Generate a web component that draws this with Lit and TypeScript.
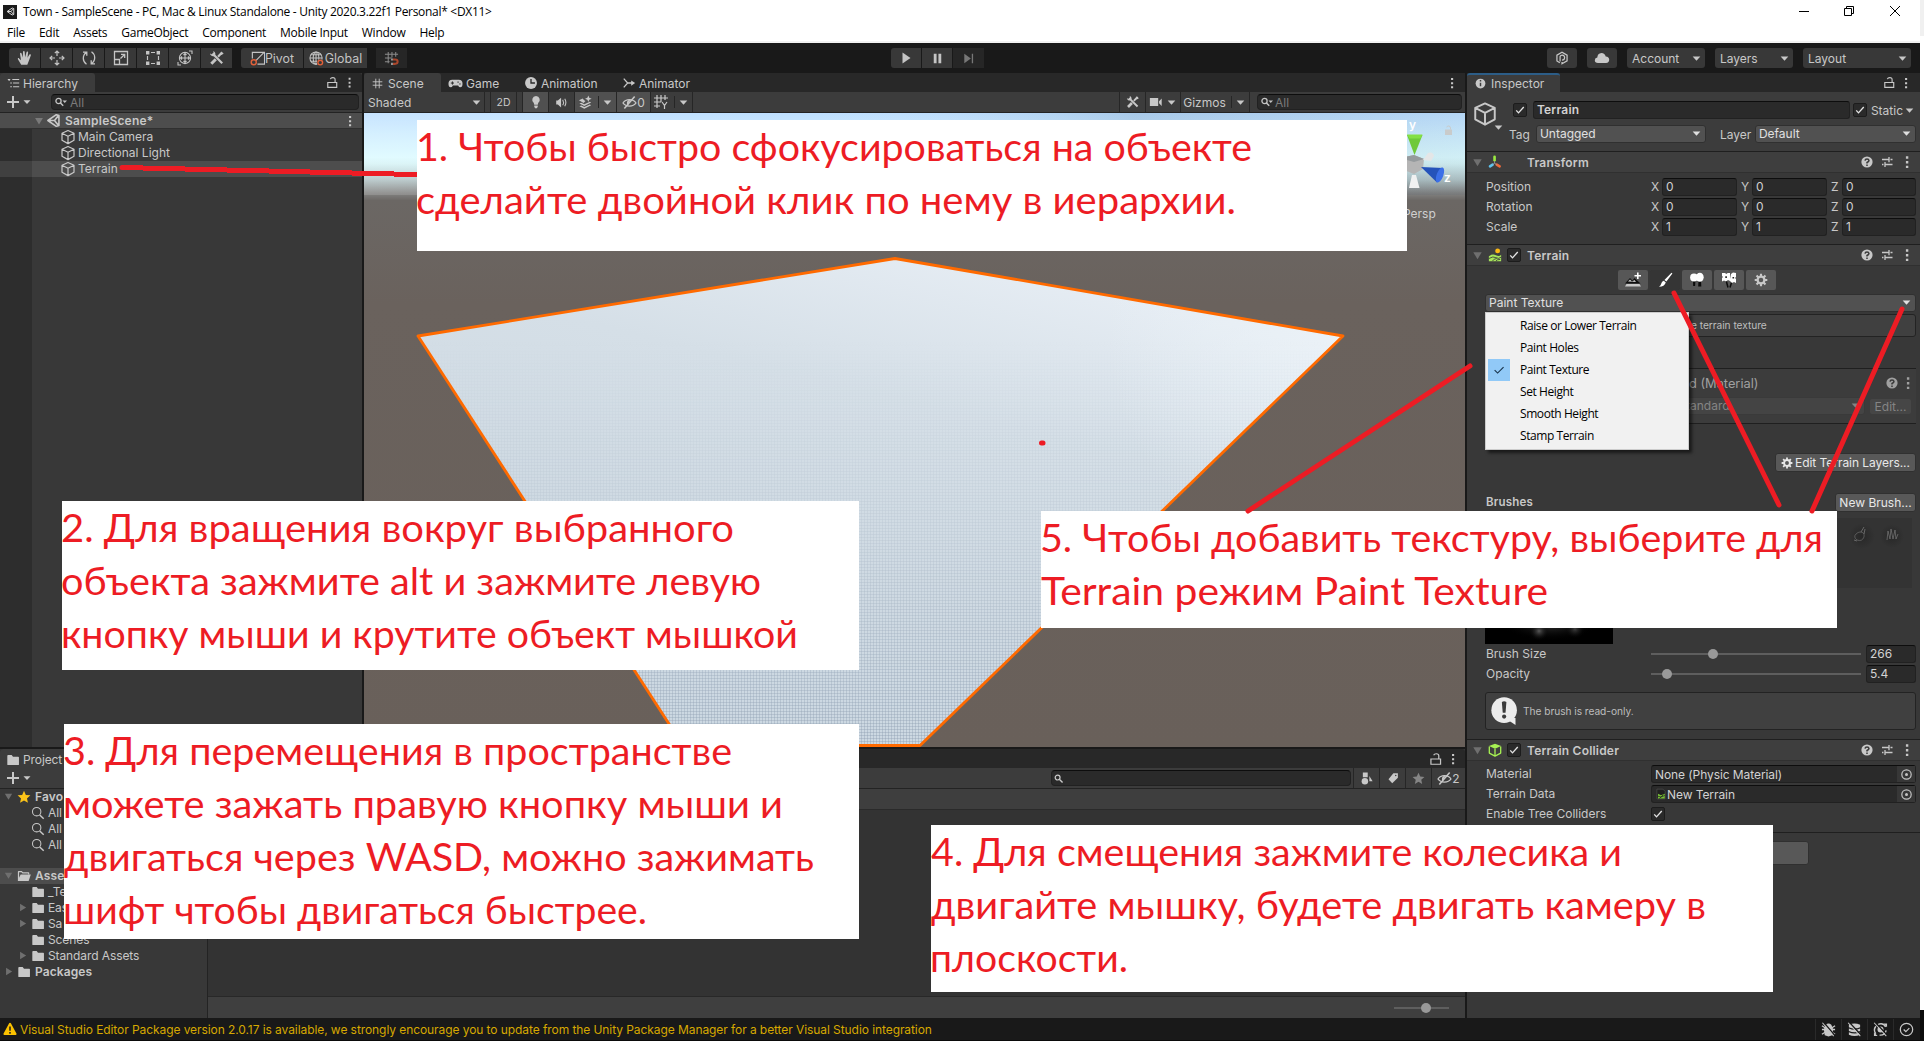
import { LitElement, html, svg, css, nothing } from "lit";
import type { TemplateResult } from "lit";
import { customElement } from "lit/decorators.js";
import { classMap } from "lit/directives/class-map.js";

/* Icons share a 16 x 16 grid and take their colour from the surrounding text. */
const star = svg`<path fill="currentColor" d="M8 .8l2.100 4.800 5.200.5-3.900 3.500 1.100 5.100L8 12.100l-4.500 2.600 1.100-5.100L.7 6.100l5.200-.5z"/>`;
const tools = svg`<path stroke="currentColor" stroke-width="2.200" fill="none" d="M3.500 3.500l9.700 9.700M13 2.500l-4 4.300"/><path stroke="currentColor" stroke-width="3" d="M2.300 13.700l4.500-4.500"/><path fill="currentColor" d="M1 3.600C1.500 6 4 7 5.600 5.800 7 4.500 6.600 2 4.300 1l.2 2.300-1.300 1.300zM12.500 1.500l2.200 2.200-2.500 1.300-1-1z"/>`;
const eyeOff = svg`<g fill="none" stroke="currentColor" stroke-width="1.300"><path d="M1 8.500C4.200 3.800 11.800 3.800 15 8.500 11.800 13 4.200 13 1 8.500z"/><path d="M13.500 1.500l-11 13" stroke-width="1.600"/></g><path fill="currentColor" d="M8.800 5.500a3 3 0 0 0-2.800 5z"/>`;
const gear = svg`<circle cx="8" cy="8" r="3.900" fill="none" stroke="currentColor" stroke-width="2.600"/><path stroke="currentColor" stroke-width="2.400" d="M8 .8v3M8 12.200v3M.8 8h3M12.200 8h3M2.900 2.900l2.200 2.200M10.900 10.900l2.200 2.200M13.100 2.900l-2.200 2.200M5.100 10.900l-2.200 2.200"/>`;
const folder = svg`<path fill="currentColor" d="M1.500 3.200q0-1 1-1h4l1.500 2h6q.8 0 .8.800V13q0 .8-.8.800H2.300q-.8 0-.8-.8z"/>`;
const gridMark = svg`<path stroke="currentColor" stroke-width="1.300" fill="none" d="M5.500 1v14M10.500 1v14M1 5.500h14M1 10.500h14"/>`;
const cube = svg`<path fill="none" stroke="currentColor" stroke-width="1.200" stroke-linejoin="round" d="M8 1.500l6 2.800v7L8 14.600l-6-3.300v-7zM2 4.300l6 3 6-3M8 7.300v7.300"/>`;
const circleBase = svg`<circle cx="8" cy="8" r="6.600" fill="none" stroke="currentColor" stroke-width="1.300"/>`;

const ICONS: Record<string, TemplateResult | ReturnType<typeof svg>> = {
  star, tools, eyeOff, gear, folder, grid: gridMark, cube,
  hand: svg`<path fill="currentColor" d="M4.200 14.800L.9 9.200c-.4-.9.600-1.500 1.200-.8L4 10.300 3 3.800c-.1-1.100 1.300-1.300 1.600-.2L5.800 7.500 6 1.800c.1-1.100 1.600-1.100 1.700 0L8.100 7.300 9.500 2.200c.3-1 1.700-.7 1.600.4L10.500 7.800l1.900-3.200c.6-.9 1.800-.2 1.400.8l-2.300 6.300-1.200 3.100z"/>`,
  move: svg`<g fill="none" stroke="currentColor" stroke-width="1.200"><path d="M8 1v5M8 10v5M1 8h5M10 8h5M5.800 3.200L8 1l2.200 2.200M5.800 12.800L8 15l2.200-2.200M3.200 5.800L1 8l2.200 2.200M12.800 5.800L15 8l-2.200 2.200"/></g>`,
  rotate: svg`<g fill="none" stroke="currentColor" stroke-width="1.300"><path d="M5.500 14.200C1.500 11.500 1 5.500 5.500 2.300M2 2.200h3.800v3.600M10.500 1.800c4 2.700 4.500 8.700 0 11.900M14 13.800h-3.800v-3.600"/></g>`,
  scale: svg`<g fill="none" stroke="currentColor" stroke-width="1.300"><path d="M1.500 1.500h13v13h-13zM1.500 9.500h5v5M7.500 8.500l4-4M8 4.300h3.700V8"/></g>`,
  rect: svg`<path fill="currentColor" d="M1 1h3.400v3.400H1zM11.600 1H15v3.400h-3.400zM1 11.600h3.400V15H1zM11.600 11.600H15V15h-3.400z"/><path stroke="currentColor" stroke-width="1.200" d="M6 2.500h4M6 13.500h4M2.500 6v4M13.500 6v4"/>`,
  transform: svg`<g fill="none" stroke="currentColor" stroke-width="1.100"><circle cx="8" cy="8" r="5.600"/><path d="M8 3.500v9M3.500 8h9M6.500 5L8 3.500 9.500 5M6.500 11L8 12.500 9.500 11M5 6.500L3.500 8 5 9.500M11 6.500L12.500 8 11 9.500M12 1h3v3M4 15H1v-3"/></g>`,
  pivot: svg`<g fill="none" stroke="currentColor" stroke-width="1.200"><path d="M2.500 8V1.500h13v12.500H8M6 10.500l9-9"/></g><circle cx="4" cy="12" r="2.700" fill="none" stroke="#e2613a" stroke-width="1.500"/>`,
  global: svg`<g fill="none" stroke="currentColor" stroke-width="1.100"><circle cx="7.500" cy="7.500" r="6.500"/><ellipse cx="7.500" cy="7.500" rx="3" ry="6.500"/><path d="M1 7.500h13M2 4h11M2 11h7M7.500 1v13"/></g><circle cx="12" cy="12.300" r="3.600" fill="#383838"/><circle cx="12" cy="12.300" r="2.500" fill="none" stroke="#e2613a" stroke-width="1.500"/>`,
  snap: svg`<path fill="none" stroke="#8a8a8a" stroke-width="1.100" d="M4.500 1v12M8.500 1v6M12.500 1v5M1 3.500h14M1 7.500h7M1 11.500h5"/><path fill="none" stroke="#a9472c" stroke-width="2.200" d="M9.500 9h2.500q2.500 0 2.500 2.300T12 13.700H9.500"/><path stroke="#9a9a9a" stroke-width="2.200" d="M7.500 9h2M7.500 13.700h2"/>`,
  play: svg`<path fill="currentColor" d="M4.500 2.500l8 5.500-8 5.500z"/>`,
  pause: svg`<path fill="currentColor" d="M4 3h3v10H4zM9 3h3v10H9z"/>`,
  step: svg`<path fill="currentColor" d="M3.500 3l7 5-7 5zM11.500 3h1.400v10h-1.400z"/>`,
  list: svg`<path stroke="currentColor" stroke-width="1.300" fill="none" d="M1 3h3M6.500 3H15M4 7.500h2M7.500 7.500H15M4 12h2M7.500 12H15M2.600 3v2"/>`,
  lock: svg`<path fill="none" stroke="currentColor" stroke-width="1.400" d="M2.200 8h11v6h-11zM11.200 8V4.500Q11.200 2 8.400 2 6 2 5.300 3.800"/>`,
  kebab: svg`<path fill="currentColor" d="M6.900 2.300h2.400v2.400H6.900zM6.900 7h2.400v2.400H6.900zM6.900 11.700h2.400v2.400H6.900z"/>`,
  plus: svg`<path stroke="currentColor" stroke-width="2" d="M8 2v12M2 8h12"/>`,
  down: svg`<path fill="currentColor" d="M3.300 5.500h9.400L8 10.700z"/>`,
  fold: svg`<path fill="currentColor" d="M3.500 4.500h9L8 12z"/>`,
  unfold: svg`<path fill="currentColor" d="M5 3.500v9L12.500 8z"/>`,
  search: svg`<circle cx="6" cy="7" r="2.600" fill="none" stroke="currentColor" stroke-width="1.300"/><path stroke="currentColor" stroke-width="1.500" d="M7.800 8.800l3.500 3.500"/>`,
  searchMenu: svg`<circle cx="5.500" cy="7" r="2.600" fill="none" stroke="currentColor" stroke-width="1.300"/><path stroke="currentColor" stroke-width="1.500" d="M7.200 8.800l3 3"/><path fill="currentColor" d="M9.500 6.500h4.500l-2.250 2.400z"/>`,
  searchBig: svg`<circle cx="6.500" cy="6.500" r="4.800" fill="none" stroke="currentColor" stroke-width="1.200"/><path stroke="currentColor" stroke-width="1.700" d="M10 10.300l4.500 4.200"/>`,
  unity: svg`<g fill="none" stroke="currentColor" stroke-width="1.700" stroke-linejoin="round"><path d="M11 1.800L2 8l9 6.200 2.800-1V2.800zM2.500 8h6.500L13.300 2.800M9 8l4.300 5.200"/></g>`,
  gamepad: svg`<path fill="currentColor" d="M4.500 4h7q4 .2 4 4.200 0 3.800-2.500 3.800-1.200 0-2.200-2H5.200q-1 2-2.200 2Q.5 12 .5 8.200.5 4.200 4.500 4z"/><path stroke="#282828" stroke-width="1" d="M3 7.500h3.400M4.700 5.800v3.400M10 6.500h1.500M12 8.500h1.500"/>`,
  clock: svg`<circle cx="8" cy="8" r="6.800" fill="currentColor"/><path stroke="#282828" stroke-width="1.500" fill="none" d="M8 3.500V8h4.500"/>`,
  animator: svg`<path fill="none" stroke="currentColor" stroke-width="1.500" d="M2 3l4.500 5L2 13M6.500 8H12"/><path fill="currentColor" d="M10.500 5l4.500 3-4.500 3z"/>`,
  bulb: svg`<path fill="currentColor" d="M8 1.200a4.300 4.300 0 0 1 2.500 7.800L10 11H6l-.5-2A4.300 4.300 0 0 1 8 1.200zM6 12h4v1.500L9 15H7l-1-1.500z"/>`,
  audio: svg`<path fill="currentColor" d="M1.500 5.500h2L7.500 2v12L3.500 10.500h-2z"/><path fill="none" stroke="currentColor" stroke-width="1.300" d="M9.500 4.500q2 3.500 0 7M12 3.500q2.800 4.500 0 9"/>`,
  effects: svg`<path fill="currentColor" d="M1 5.500l4-1.800 1.500 1.800L8 6.500l-2 2zM1.500 9l2-.8 3.200 1.600 6-2.600 1.300.8-7.300 3.700zM1.500 12l2-.8 3.200 1.600 6-2.600 1.300.8-7.300 3.700zM11 .5l1 2.500 2.500 1L12 5l-1 2.500L10 5 7.500 4 10 3z"/>`,
  gridY: svg`<path stroke="currentColor" stroke-width="1.200" fill="none" d="M4 1v13M8 1v7M12 1v5M1 4h14M1 8h7M1 12h6M9 8l2.500 3.500L14 8M11.500 11.500V15"/>`,
  camera: svg`<path fill="currentColor" d="M1 3.500h9.500v9H1zM11.500 7L14.500 4v8.500l-3-3z"/>`,
  info: svg`<circle cx="8" cy="8" r="6" fill="currentColor"/><path stroke="#3c3c3c" stroke-width="1.800" d="M8 3.800v1.800M8 7v4.500"/>`,
  help: svg`<circle cx="8" cy="8" r="5.600" fill="currentColor"/><path fill="none" stroke="#3a3a3a" stroke-width="1.500" d="M6 6.700Q6.200 5 8 5t2 1.600Q10 7.700 8 8.500v1M8 10.600v1.400"/>`,
  preset: svg`<path stroke="currentColor" stroke-width="1.300" d="M3 5.500h6.500M11.500 5.500h2M10 3v5.200M3 10.500h1.500M6.500 10.500h7M6 8v5"/>`,
  check: svg`<path fill="none" stroke="#e4e4e4" stroke-width="1.800" d="M3 8.500l3 3.300L13 4"/>`,
  checkThin: svg`<path fill="none" stroke="#17324a" stroke-width="1.300" d="M3 8.200l3.400 3.300L13.200 4.600"/>`,
  axes: svg`<g stroke-width="3" stroke-linecap="round"><path stroke="#9bea42" d="M7.500 2v4"/><path stroke="#5fc3ee" d="M2.300 13l3-2"/><path stroke="#ef6a3a" d="M10 11l3.300 2"/></g><path stroke="#9a9a9a" stroke-width="1" d="M7.500 7v2.500M7.500 9.500L5.500 11M7.500 9.500l2.500 1.500" fill="none"/>`,
  terrain: svg`<circle cx="11" cy="3.300" r="2.800" fill="#fcb813"/><path fill="#a6e45a" d="M1 9.500Q5 6.300 9 8.300t6-.5V15H1z"/><path fill="none" stroke="#3c3c3c" stroke-width="1" d="M1 12q5-3 8-1t6-.5M5 15q2-3 5-3M9 15q1-2 5-2"/>`,
  collider: svg`<path fill="#a6f053" d="M8 .8l7 2.700-7 3-7-3z"/><path fill="none" stroke="#a6f053" stroke-width="1.500" stroke-linejoin="round" d="M1.500 4v7.500L8 15l6.500-3.500V4M8 6.500V15"/>`,
  target: svg`<circle cx="8" cy="8" r="5" fill="none" stroke="currentColor" stroke-width="1.300"/><circle cx="8" cy="8" r="1.600" fill="currentColor"/>`,
  asset: svg`<path fill="#202020" stroke="#555" stroke-width=".8" d="M2.500 1.500h8l3 3v10h-11z"/><path fill="#78c135" d="M4 7.500l4 2 5-2V14H4z"/><path stroke="#202020" d="M4 11l4 1 5-2M6 14l5-5" fill="none"/>`,
  addTerrain: svg`<path fill="#101010" d="M0 11.500l5-5.500 2.500 2.500L9.500 6 15.500 11.500z"/><path fill="currentColor" d="M0 14.500h16L14.500 12H1.500zM3 9.500L5 7.500l2 2L9.500 8 11 10z"/><path stroke="#fff" stroke-width="1.600" d="M12.800 .5v6.500M9.500 3.700h6.500"/>`,
  brush: svg`<path fill="#fff" d="M14.500.8l.9.800-6 8-2-1.700zM6.800 8.700l2 1.700Q7.500 14.500 2 14.800q2-1.200 2.300-3.300.4-2.400 2.500-2.800z"/>`,
  trees: svg`<path fill="#0c0c0c" d="M4 8h2.500l-.4 6H4.200zM9.500 8h2.500l.3 6.500H9.200z"/><circle cx="5" cy="5.500" r="3.900" fill="#fff"/><ellipse cx="10.800" cy="5.200" rx="3.900" ry="4.500" fill="#fff"/>`,
  flowers: svg`<path stroke="#0c0c0c" stroke-width="1.500" d="M5 8l2 7.500M11 9l-2 6.500" fill="none"/><path fill="#fff" d="M1 1h3l1.300 1L6.700 1H9v8l-2-1-2 1.500L3 8.500 1 9.500V6l1-1-1-1zM10 2l2-1.500L15 1v4l-1 1 1 1v4l-2-1-2 1-2-2V7z"/><path fill="#202020" d="M4.300 4.300h1.600v1.600H4.300zM11.500 5h1.600v1.600h-1.600z"/>`,
  plastic: svg`<path fill="none" stroke="currentColor" stroke-width="1.400" d="M5.500 13.500L2.200 11.300V4.700L8 1.400l5.800 3.300v6.600L8 14.600V12.500M5.800 12V6.200Q6.500 4.600 8.300 4.700q2.700.3 2.700 3Q10.800 10.400 8 10.300"/>`,
  cloud: svg`<path fill="currentColor" d="M4 13Q.8 12.800.8 10.200.9 7.900 3.300 7.500 3.500 3.300 7.500 3q3.300.1 4.200 3.500 3.500.2 3.500 3.300T12 13z"/>`,
  folderOpen: svg`<path fill="currentColor" d="M1 13.700V3q0-.8.800-.8h3.700l1.200 1.500h6.500q.8 0 .8.800v1.500h-1.300V5.100H6.300L5 3.600H2.400V10l1.800-3.700h11.600L13.300 13.700z"/>`,
  shapes: svg`<path fill="currentColor" d="M3.500 .5h6v6h-6zM11.500 5l4 6.500h-4z"/><circle cx="6" cy="11.500" r="4" fill="currentColor"/>`,
  tag: svg`<path fill="currentColor" d="M8.500 1.500H14.500v6L7 15 2 9.500z"/><circle cx="11.700" cy="4.500" r="1" fill="#3c3c3c"/>`,
  warning: svg`<path fill="#fcc200" d="M8 .8q.7 0 1 .7l6.500 12q.3 1.200-.9 1.300H1.400q-1.200-.1-.9-1.300L7 1.500q.3-.7 1-.7z"/><path stroke="#222" stroke-width="1.800" d="M8 5v5M8 11.500v1.800"/>`,
  bug: svg`<path fill="currentColor" d="M5 3q3-3 6 0l2 5-1 6-4 1.500L4 14 3 8z"/><path stroke="currentColor" stroke-width="1.400" d="M1 4l14 9M1 8h14M1 13l14-9"/><path stroke="#191919" stroke-width="1.400" d="M3 .5l12 14"/><path stroke="currentColor" stroke-width="1.100" d="M1.500.8l12 14.200"/>`,
  layers: svg`<path fill="currentColor" d="M2 3q6-3 12 0v2.500q-6 2.500-12 0zM2 7q6 2.500 12 0v2.700q-6 2.500-12 0zM2 11q6 2.500 12 0v2.500q-6 3-12 0z"/><path stroke="#191919" stroke-width="1.600" d="M2.500.5l13 14"/><path stroke="currentColor" stroke-width="1.100" d="M1.200.8l13 14.200"/>`,
  refreshOff: svg`<path fill="none" stroke="currentColor" stroke-width="1.500" d="M5 2.700q6-2.500 8.500 2.500M14 9q-1 5.500-7 5M3 12.500Q0 8.500 3 4.500"/><circle cx="8" cy="8" r="3.200" fill="currentColor"/><path fill="currentColor" d="M11 1.500h4v4zM5 14.800H1v-4z"/><path stroke="#191919" stroke-width="1.600" d="M2.500.5l13 14"/><path stroke="currentColor" stroke-width="1.100" d="M1.200.8l13 14.200"/>`,
  ok: svg`${circleBase}<path fill="none" stroke="currentColor" stroke-width="1.300" d="M5 8l2.300 2.300L11 6.500"/>`,
  speech: svg`<circle cx="7.500" cy="7.500" r="7.300" fill="#ececec"/><path fill="#ececec" d="M8 12h6v4z"/><path fill="#3c3c3c" d="M6.200 2.800q1.300-.8 2.600 0L8.300 9H6.700z"/><circle cx="7.500" cy="11.200" r="1.200" fill="#3c3c3c"/>`,
};

const ic = (name: string, size = 16, cls = "") =>
  html`<svg class="ic ${cls}" width=${size} height=${size} viewBox="0 0 16 16">${ICONS[name]}</svg>`;

type Note = { x: number; y: number; w: number; h: number; lines: [string, number, number, number][] };
/* Each line is text, left, baseline and width inside its note. */
const NOTES: Note[] = [
  { x: 417, y: 120, w: 990, h: 131, lines: [["1. Чтобы быстро сфокусироваться на объекте", -1, 40.5, 836], ["сделайте двойной клик по нему в иерархии.", -1, 93.5, 820]] },
  { x: 62, y: 501, w: 797, h: 169, lines: [["2. Для вращения вокруг выбранного", -1, 40.5, 673], ["объекта зажмите alt и зажмите левую", -1, 93.5, 700], ["кнопку мыши и крутите объект мышкой", -1, 146.5, 737]] },
  { x: 64, y: 724, w: 795, h: 215, lines: [["3. Для перемещения в пространстве", -1, 40.5, 669], ["можете зажать правую кнопку мыши и", -1, 93.5, 720], ["двигаться через WASD, можно зажимать", 0, 146.5, 750], ["шифт чтобы двигаться быстрее.", -1, 199.5, 584]] },
  { x: 931, y: 825, w: 842, h: 167, lines: [["4. Для смещения зажмите колесика и", 0, 40.5, 691], ["двигайте мышку, будете двигать камеру в", 0, 93.5, 775], ["плоскости.", -1, 146.5, 198]] },
  { x: 1041, y: 511, w: 796, h: 117, lines: [["5. Чтобы добавить текстуру, выберите для", -1, 40.5, 783], ["Terrain режим Paint Texture", 0, 93.5, 507]] },
];

const base = css`
  * { box-sizing: border-box; }
  .ic { flex: none; display: block; }
  .row { display: flex; align-items: center; }
  .grow { flex: 1; min-width: 0; }
  .b { font-weight: 600; letter-spacing: 0.2px; }
`;

/* ---------- Hierarchy ---------- */
@customElement("hierarchy-panel")
export class HierarchyPanel extends LitElement {
  static styles = [base, css`
    :host { display: flex; flex-direction: column; background: #383838; overflow: hidden; }
    .tabs { height: 19px; background: #282828; border-radius: 3px 3px 0 0; }
    .tab { width: 95px; height: 19px; padding: 1px 0 0 7px; gap: 3px; background: #3c3c3c; border-radius: 3px 3px 0 0; }
    .tail { padding-right: 6px; gap: 4px; }
    .bar { height: 21px; background: #3c3c3c; border-bottom: 1px solid #232323; padding: 0 3px 0 5px; }
    .find { margin-left: 18px; height: 16px; background: #2a2a2a; border: 1px solid #212121; border-top-color: #0d0d0d; border-radius: 4px; color: #7b7b7b; padding-left: 1px; gap: 1px; }
    .find .ic { color: #c4c4c4; }
    .scene { height: 16px; background: #4d4d4d; border-bottom: 1px solid #303030; padding: 0 5px 0 32px; }
    .scene .ic:first-child { color: #7a7a7a; }
    .item { height: 16px; }
    .gutter { width: 32px; align-self: stretch; background: #2d2d2d; }
    .item.on { background: #4d4d4d; }
    .item.on .gutter { background: #404040; }
    .name { padding-left: 28px; gap: 2px; }
    .name span { padding-bottom: 1px; }
    .rest { display: flex; flex: 1; }
  `];
  render() {
    return html`
      <div class="row tabs"><div class="row tab">${ic("list", 13)}<span>Hierarchy</span></div><div class="grow"></div>
        <div class="row tail">${ic("lock", 13)}${ic("kebab", 13)}</div></div>
      <div class="row bar">${ic("plus", 16)}${ic("down", 12)}<div class="row grow find">${ic("searchMenu", 16)}<span>All</span></div></div>
      <div class="row scene">${ic("fold", 14)}${ic("unity", 15)}<span class="b grow" style="padding-left:4px">SampleScene*</span>${ic("kebab", 14)}</div>
      ${["Main Camera", "Directional Light", "Terrain"].map((n, i) => html`
        <div class=${classMap({ row: true, item: true, on: i === 2 })}><div class="gutter"></div><div class="row name">${ic("cube", 16)}<span>${n}</span></div></div>`)}
      <div class="rest"><div class="gutter"></div></div>`;
  }
}

/* ---------- Scene ---------- */
@customElement("scene-panel")
export class ScenePanel extends LitElement {
  static styles = [base, css`
    :host { display: flex; flex-direction: column; background: #383838; overflow: hidden; }
    .tabs { height: 19px; background: #282828; padding-right: 6px; }
    .tab { height: 19px; padding-top: 1px; }
    .on { width: 77px; background: #3c3c3c; padding-left: 8px; gap: 5px; border-radius: 3px 3px 0 0; }
    .bar { height: 21px; background: #3c3c3c; border-bottom: 1px solid #232323; }
    .cell { height: 20px; border-right: 1px solid #262626; justify-content: center; }
    .lit { background: #505050; }
    .sep { width: 1px; height: 12px; background: #262626; }
    .find { width: 205px; margin: 0 3px 0 7px; height: 16px; background: #2a2a2a; border: 1px solid #212121; border-top-color: #0d0d0d; border-radius: 4px; color: #7b7b7b; gap: 0; padding-left: 1px; }
    .find .ic { color: #c4c4c4; }
    .view { display: block; width: 1101px; height: 634px; }
    .axis { font: 600 12px Inter, sans-serif; fill: #fff; }
    .mode { font: 12px Inter, sans-serif; fill: #d0d0d0; }
  `];
  render() {
    const cell = (w: number, c: unknown, lit = false) =>
      html`<div class=${classMap({ row: true, cell: true, lit })} style="width:${w}px">${c}</div>`;
    return html`
      <div class="row tabs">
        <div class="row tab on">${ic("grid", 11)}<span>Scene</span></div>
        <div class="row tab" style="width:83px;padding-left:7px;gap:3px">${ic("gamepad", 15)}<span>Game</span></div>
        <div class="row tab" style="width:97px;gap:3px">${ic("clock", 14)}<span>Animation</span></div>
        <div class="row tab grow" style="gap:3px;padding-left:1px">${ic("animator", 14)}<span>Animator</span></div>
        ${ic("kebab", 14)}
      </div>
      <div class="row bar">
        <div class="row cell" style="width:121px;padding:0 1px 0 4px"><span class="grow">Shaded</span>${ic("down", 13)}</div>
        ${cell(6, nothing)}${cell(26, html`<span style="font-size:10.500px">2D</span>`)}${cell(6, nothing)}
        ${cell(26, ic("bulb", 14), true)}${cell(26, ic("audio", 13))}
        ${cell(42, html`${ic("effects", 15)}<span style="width:5px"></span><span class="sep"></span><span style="width:2px"></span>${ic("down", 13)}`, true)}
        ${cell(34, html`${ic("eyeOff", 15)}<span>0</span>`, true)}
        ${cell(42, html`${ic("gridY", 16)}<span style="width:5px"></span><span class="sep"></span><span style="width:2px"></span>${ic("down", 13)}`)}
        <div class="grow cell"></div>
        ${cell(26, ic("tools", 14))}
        ${cell(35, html`${ic("camera", 14)}<span style="width:2px"></span>${ic("down", 13)}`)}
        ${cell(69, html`<span>Gizmos</span><span style="width:5px"></span><span class="sep"></span><span style="width:2px"></span>${ic("down", 13)}`)}
        <div class="row find">${ic("searchMenu", 16)}<span>All</span></div>
      </div>
      <svg class="view" viewBox="364 113 1101 634">
        <defs>
          <linearGradient id="sky" x1="0" y1="113" x2="0" y2="747" gradientUnits="userSpaceOnUse">
            <stop offset="0" stop-color="#bedfff"/><stop offset=".035" stop-color="#cfeeff"/><stop offset=".07" stop-color="#dcfaff"/>
            <stop offset=".08" stop-color="#d6f3f6"/><stop offset=".105" stop-color="#b2c4c6"/><stop offset=".125" stop-color="#858685"/>
            <stop offset=".138" stop-color="#6b6764"/><stop offset=".3" stop-color="#6a625d"/><stop offset="1" stop-color="#69605a"/>
          </linearGradient>
          <linearGradient id="shade" x1="364" y1="0" x2="1465" y2="0" gradientUnits="userSpaceOnUse">
            <stop offset="0" stop-color="#fff" stop-opacity=".15"/><stop offset=".4" stop-color="#fff" stop-opacity="0"/><stop offset=".7" stop-color="#204060" stop-opacity=".14"/><stop offset="1" stop-color="#204060" stop-opacity=".06"/>
          </linearGradient>
          <linearGradient id="ground" x1="960" y1="258" x2="840" y2="747" gradientUnits="userSpaceOnUse">
            <stop offset="0" stop-color="#e5ecf3"/><stop offset=".3" stop-color="#d5dfe7"/><stop offset=".7" stop-color="#ced9e2"/><stop offset="1" stop-color="#ccd8e2"/>
          </linearGradient>
          <linearGradient id="fade" x1="0" y1="340" x2="0" y2="747" gradientUnits="userSpaceOnUse">
            <stop offset="0" stop-color="#fff" stop-opacity="0"/><stop offset=".5" stop-color="#fff" stop-opacity=".35"/><stop offset="1" stop-color="#fff"/>
          </linearGradient>
          <radialGradient id="glow" cx="1345" cy="330" r="240" gradientUnits="userSpaceOnUse">
            <stop offset="0" stop-color="#ecf3f8" stop-opacity=".8"/><stop offset="1" stop-color="#ecf3f8" stop-opacity="0"/>
          </radialGradient>
          <pattern id="mesh" width="3" height="3" patternUnits="userSpaceOnUse"><path d="M0 .5h3M.5 0v3" stroke="#8799ac" stroke-opacity=".36" stroke-width="1"/></pattern>
          <mask id="m"><rect x="364" y="113" width="1101" height="634" fill="url(#fade)"/></mask>
        </defs>
        <rect x="364" y="113" width="1101" height="634" fill="url(#sky)"/>
        <rect x="364" y="113" width="1101" height="82" fill="url(#shade)"/>
        <path d="M895 258L1343 336 920 745.500H683L418 336z" fill="url(#ground)"/>
        <path d="M895 258L1343 336 920 745.500H683L418 336z" fill="url(#glow)"/>
        <path d="M895 258L1343 336 920 745.500H683L418 336z" fill="url(#mesh)" mask="url(#m)"/>
        <path d="M895 258.500L1343 336 920 745.500H683L418 336z" fill="none" stroke="#ff6a00" stroke-width="2.800" stroke-linejoin="round"/>
        <g>
          <path fill="#b5b5b5" d="M1400 158l14-3 10 4-1 10-9 5-10-4z"/><path fill="#959a9d" d="M1400 158l14-3 10 4-10 3z"/>
          <path fill="#6fc93a" d="M1407 135l7.500 20 8-20z"/><path fill="#84e044" d="M1407 134.500h15.500l-2 4h-11z"/>
          <path fill="#e4e6e7" d="M1423 160l5-7q5-2 6 3l-3 5z"/>
          <path fill="#f0f1f1" d="M1412 175h4l3.500 13h-10.500z"/>
          <path fill="#2553ba" d="M1421 167l22 1-6 14.500z"/><ellipse cx="1440" cy="175" rx="3.300" ry="8" fill="#3b6fe8" transform="rotate(20 1440 175)"/>
          <text class="axis" x="1409" y="129">y</text><text class="axis" x="1444" y="182">z</text>
          <text class="mode" x="1403" y="218">Persp</text>
        </g>
        <g fill="#c9cbcb" transform="translate(1444 125)"><path d="M1 4.500h7V10H1z"/><path d="M6.500 4.500V3Q6.500 1 4.500 1 3 1 2.800 2.300" fill="none" stroke="#c9cbcb"/></g>
      </svg>`;
  }
}

/* ---------- Project ---------- */
@customElement("project-panel")
export class ProjectPanel extends LitElement {
  static styles = [base, css`
    :host { display: flex; flex-direction: column; background: #383838; overflow: hidden; }
    .tabs { height: 19px; background: #282828; padding-right: 5px; border-radius: 3px 3px 0 0; }
    .tab { width: 85px; height: 19px; padding: 2px 0 0 6px; gap: 3px; letter-spacing: -0.1px; background: #3c3c3c; border-radius: 3px 3px 0 0; }
    .bar { height: 21px; background: #3c3c3c; border-bottom: 1px solid #232323; padding-left: 5px; }
    .find { width: 300px; height: 16px; background: #2a2a2a; border: 1px solid #212121; border-top-color: #0d0d0d; border-radius: 4px; margin-right: 2px; }
    .cell { height: 20px; border-left: 1px solid #262626; justify-content: center; }
    .body { display: flex; flex: 1; min-height: 0; }
    .tree { width: 208px; border-right: 1px solid #232323; letter-spacing: -0.1px; }
    .tree .b { letter-spacing: 0.1px; }
    .node { height: 16px; gap: 2px; white-space: nowrap; }
    .node > span { padding-bottom: 1px; }
    .node.on { background: #4d4d4d; }
    .arrow { width: 13px; color: #6f6f6f; }
    .files { display: flex; flex-direction: column; flex: 1; }
    .crumb { height: 21px; background: #3e3e3e; border-bottom: 1px solid #2a2a2a; }
    .grid { flex: 1; background: #333; }
    .foot { height: 22px; background: #3f3f3f; border-top: 1px solid #282828; justify-content: flex-end; padding-right: 16px; }
    .track { width: 55px; height: 2px; background: #5e5e5e; display: flex; align-items: center; padding-left: 27px; }
    .thumb { width: 10px; height: 10px; flex: none; border-radius: 50%; background: #999; }
    .gold { color: #fcc419; }
  `];
  node(depth: number, arrow: string, icon: string, label: string, bold = false, on = false) {
    return html`<div class=${classMap({ row: true, node: true, on })} style="padding-left:${2 + depth * 14}px">
      <span class="arrow">${arrow ? ic(arrow, 13) : nothing}</span>${ic(icon, 14, icon === "star" ? "gold" : "")}<span class=${bold ? "b" : ""} style="padding-left:${bold ? 2 : 1}px">${label}</span></div>`;
  }
  render() {
    return html`
      <div class="row tabs"><div class="row tab">${ic("folder", 14)}<span>Project</span></div><div class="grow"></div>${ic("lock", 14)}<span style="width:3px"></span>${ic("kebab", 14)}</div>
      <div class="row bar">${ic("plus", 16)}${ic("down", 12)}<div class="grow"></div>
        <div class="row find">${ic("search", 15)}</div>
        <div class="row cell" style="width:26px">${ic("shapes", 13)}</div><div class="row cell" style="width:26px">${ic("tag", 12)}</div>
        <div class="row cell" style="width:26px;color:#858585">${ic("star", 13)}</div><div class="row cell" style="width:34px">${ic("eyeOff", 15)}<span>2</span></div>
      </div>
      <div class="body">
        <div class="tree">
          ${this.node(0, "fold", "star", "Favo", true)}
          ${this.node(1, "", "searchBig", "All")}${this.node(1, "", "searchBig", "All")}${this.node(1, "", "searchBig", "All")}
          <div style="height:15px"></div>
          ${this.node(0, "fold", "folderOpen", "Asse", true, true)}
          ${this.node(1, "", "folder", "_Te")}${this.node(1, "unfold", "folder", "Eas")}${this.node(1, "unfold", "folder", "Sa")}
          ${this.node(1, "", "folder", "Scenes")}${this.node(1, "unfold", "folder", "Standard Assets")}
          ${this.node(0, "unfold", "folder", "Packages", true)}
        </div>
        <div class="files"><div class="crumb"></div><div class="grid"></div><div class="row foot"><div class="track"><div class="thumb"></div></div></div></div>
      </div>`;
  }
}

/* ---------- Inspector ---------- */
@customElement("inspector-panel")
export class InspectorPanel extends LitElement {
  static styles = [base, css`
    :host { display: flex; flex-direction: column; background: #383838; overflow: hidden; position: relative; }
    .tabs { height: 19px; background: #282828; padding-right: 7px; gap: 3px; }
    .tab { width: 93px; height: 19px; padding-left: 7px; gap: 4px; background: #3c3c3c; border-top: 2px solid #2c5d87; border-radius: 3px 3px 0 0; }
    .head { height: 59px; background: #3c3c3c; display: flex; padding: 9px 4px 0 5px; }
    .obj { width: 38px; display: flex; align-items: flex-start; }
    .lines { flex: 1; display: flex; flex-direction: column; gap: 6px; }
    .field { background: #2a2a2a; border: 1px solid #212121; border-top-color: #0d0d0d; border-radius: 3px; height: 18px; display: flex; align-items: center; padding: 0 0 1px 3px; color: #d2d2d2; }
    .chk { width: 14px; height: 14px; flex: none; background: #2a2a2a; border: 1px solid #1c1c1c; border-radius: 2px; display: flex; align-items: center; justify-content: center; }
    .drop { height: 18px; background: #515151; border: 1px solid #303030; border-radius: 3px; padding: 0 2px 1px 3px; color: #e0e0e0; }
    .comp { height: 22px; background: #3e3e3e; border-top: 1px solid #1f1f1f; border-bottom: 1px solid #303030; padding: 0 5px 0 3px; }
    .comp .fold { color: #6f6f6f; }
    .comp .title { padding-left: 6px; }
    .tail { display: flex; gap: 4px; }
    .prop { height: 20px; padding: 0 4px 0 19px; }
    .label { width: 165px; padding-bottom: 1px; }
    .vec { display: flex; align-items: center; }
    .vec .field { width: 75px; margin-left: 4px; }
    .tools { display: flex; justify-content: center; gap: 2px; height: 20px; margin-top: 4px; padding-left: 7px; }
    .tool { width: 30px; height: 20px; background: #575757; border-radius: 2px; display: flex; align-items: center; justify-content: center; color: #c8c8c8; }
    .tool.on { background: #353535; }
    .help { background: #404040; border: 1px solid #232323; border-radius: 3px; color: #bdbdbd; font-size: 10.200px; letter-spacing: -0.05px; }
    .btn { background: #585858; border: 1px solid #303030; border-radius: 3px; color: #e8e8e8; display: flex; align-items: center; justify-content: center; gap: 2px; }
    .mat { height: 56px; margin: 31px 4px 0 18px; background: #3c3c3c; border-top: 1px solid #1f1f1f; border-bottom: 1px solid #1f1f1f; }
    .dim { color: #848484; }
    .slider { width: 210px; height: 2px; background: #5e5e5e; display: flex; align-items: center; margin-right: 5px; }
    .thumb { width: 10px; height: 10px; border-radius: 50%; background: #999; flex: none; }
    .ref { flex: 1; height: 18px; background: #2a2a2a; border: 1px solid #212121; border-top-color: #0d0d0d; border-radius: 3px; color: #d2d2d2; padding-left: 3px; letter-spacing: -0.08px; }
    .pick { width: 18px; height: 16px; background: #373737; display: flex; align-items: center; justify-content: center; color: #c4c4c4; }
    .menu { position: absolute; left: 18px; top: 239px; width: 204px; height: 138px; background: #f1f1f1; border: 1px solid #ccc; box-shadow: 3px 3px 3px rgba(0,0,0,.55); padding: 2px; color: #000; font-family: "Open Sans", sans-serif; font-size: 12px; letter-spacing: -0.42px; }
    .mi { height: 22px; gap: 10px; }
    .mi > span:last-child { padding-bottom: 2px; }
    .mark { width: 22px; height: 22px; display: flex; align-items: center; justify-content: center; }
    .mark.on { background: #91c9f7; }
  `];
  comp(icon: string, title: string, check: boolean) {
    return html`<div class="row comp">${ic("fold", 15, "fold")}<span style="width:3px"></span>${ic(icon, 14)}<span style="width:5px"></span>
      ${check ? html`<span class="chk">${ic("check", 12)}</span>` : html`<span style="width:14px"></span>`}
      <span class="b title grow">${title}</span><span class="tail">${ic("help", 16)}${ic("preset", 16)}${ic("kebab", 16)}</span></div>`;
  }
  vec(label: string, v: string) {
    return html`<div class="row prop"><span class="label">${label}</span>
      ${["X", "Y", "Z"].map((a, i) => html`<span class="vec" style="width:${i === 2 ? 85 : 90}px"><span style="width:7px;padding-bottom:1px">${a}</span><span class="field">${v}</span></span>`)}</div>`;
  }
  render() {
    return html`
      <div class="row tabs"><div class="row tab">${ic("info", 13)}<span>Inspector</span></div><div class="grow"></div>${ic("lock", 13)}${ic("kebab", 14)}</div>
      <div class="head">
        <div class="obj">${ic("cube", 26)}<div style="padding-top:20px;margin-left:-6px">${ic("down", 13)}</div></div>
        <div class="lines">
          <div class="row" style="padding-left:5px"><span class="chk">${ic("check", 12)}</span><div class="field b" style="width:317px;margin:0 3px 0 6px">Terrain</div><span class="chk">${ic("check", 12)}</span><span style="padding-left:4px">Static</span>${ic("down", 13)}</div>
          <div class="row"><span style="width:28px;padding-left:1px">Tag</span><div class="row drop" style="width:170px"><span class="grow">Untagged</span>${ic("down", 13)}</div><span style="width:49px;padding-left:14px">Layer</span><div class="row drop grow"><span class="grow">Default</span>${ic("down", 13)}</div></div>
        </div>
      </div>
      ${this.comp("axes", "Transform", false)}
      <div style="height:71px;padding-top:4px">${this.vec("Position", "0")}${this.vec("Rotation", "0")}${this.vec("Scale", "1")}</div>
      ${this.comp("terrain", "Terrain", true)}
      <div class="tools">${["addTerrain", "brush", "trees", "flowers", "gear"].map((n) => html`<span class=${classMap({ tool: true, on: n === "brush" })}>${ic(n, n === "gear" ? 14 : 16)}</span>`)}</div>
      <div class="row drop" style="margin:4px 4px 0 18px"><span class="grow">Paint Texture</span>${ic("down", 13)}</div>
      <div class="row help" style="margin:2px 4px 0 18px;height:23px;padding-left:205px">e terrain texture</div>
      <div class="mat">
        <div class="row dim" style="height:28px;padding:0 0 0 204px;color:#a0a0a0"><span class="grow" style="font-size:12.800px">d (Material)</span>${ic("help", 16)}${ic("kebab", 16)}</div>
        <div class="row" style="height:18px"><div class="row drop dim" style="width:380px;margin-right:4px;padding-left:200px;background:#444;border-color:#3a3a3a"><span class="grow">tandard</span>${ic("down", 13)}</div><div class="btn dim" style="width:43px;height:17px;background:#464646;border-color:#3c3c3c">Edit...</div></div>
      </div>
      <div class="row" style="margin-top:29px;padding-right:4px;justify-content:flex-end"><div class="btn" style="width:141px;height:19px;letter-spacing:-0.05px">${ic("gear", 12)}<span>Edit Terrain Layers...</span></div></div>
      <div class="row" style="margin-top:21px;padding:0 4px 0 19px"><span class="grow b" style="font-size:11.500px">Brushes</span><div class="btn" style="width:81px;height:19px">New Brush...</div></div>
      <div style="margin:6px 8px 0 18px;height:70px;background:#333;display:flex;justify-content:flex-end;padding:5px 8px">
        <svg width="56" height="26" viewBox="0 0 56 26"><defs><radialGradient id="halo"><stop offset="0" stop-color="#272727"/><stop offset="1" stop-color="#333"/></radialGradient></defs><circle cx="14" cy="13" r="13" fill="url(#halo)"/><circle cx="44" cy="13" r="12" fill="url(#halo)"/><g fill="none" stroke="#777"><path d="M12 9q5 0 4 5-2 5-7 3-4-3-1-6 2-2 4-2z" opacity=".6"/><path d="M16 4l-3 5M17 6l-1 5M6 17l3 1" opacity=".8"/><path d="M39 17l1-9 2 8 1-10 2 10 2-9 1 9 2-5" opacity=".7"/></g></svg>
      </div>
      <div style="margin:13px 0 0 18px;width:128px;height:43px;background:#000;display:flex;align-items:flex-end"><svg width="128" height="43" viewBox="0 0 128 43"><defs><radialGradient id="spot"><stop offset="0" stop-color="#585858"/><stop offset="1" stop-color="#000" stop-opacity="0"/></radialGradient></defs><ellipse cx="65" cy="18" rx="52" ry="22" fill="url(#spot)"/><circle cx="54" cy="30" r="10" fill="url(#spot)"/><circle cx="90" cy="28" r="10" fill="url(#spot)" opacity=".7"/></svg></div>
      <div class="row prop"><span class="label">Brush Size</span><div class="slider" style="padding-left:57px"><div class="thumb"></div></div><div class="field grow">266</div></div>
      <div class="row prop"><span class="label">Opacity</span><div class="slider" style="padding-left:11px"><div class="thumb"></div></div><div class="field grow">5.4</div></div>
      <div class="row help" style="margin:8px 4px 0 18px;height:38px;padding-left:5px;gap:4px">${ic("speech", 28)}<span>The brush is read-only.</span></div>
      <div style="height:9px"></div>
      ${this.comp("collider", "Terrain Collider", true)}
      <div style="height:71px;padding-top:3px">
        <div class="row prop"><span class="label">Material</span><div class="row ref"><span class="grow">None (Physic Material)</span><span class="pick">${ic("target", 15)}</span></div></div>
        <div class="row prop"><span class="label">Terrain Data</span><div class="row ref">${ic("asset", 12)}<span class="grow">New Terrain</span><span class="pick">${ic("target", 15)}</span></div></div>
        <div class="row prop"><span class="label">Enable Tree Colliders</span><span class="chk">${ic("check", 12)}</span></div>
      </div>
      <div style="border-top:1px solid #1f1f1f;padding-top:8px;display:flex;justify-content:center"><div class="btn" style="width:230px;height:24px"></div></div>
      <div class="menu">${["Raise or Lower Terrain", "Paint Holes", "Paint Texture", "Set Height", "Smooth Height", "Stamp Terrain"].map((n, i) => html`<div class="row mi"><span class=${classMap({ mark: true, on: i === 2 })}>${i === 2 ? ic("checkThin", 14) : nothing}</span><span>${n}</span></div>`)}</div>`;
  }
}

/* ---------- Shell ---------- */
@customElement("app-root")
export class AppRoot extends LitElement {
  static styles = [base, css`
    :host { display: flex; position: relative; width: 1924px; height: 1041px; overflow: hidden; background: #fff; font: 12px/15px Inter, sans-serif; color: #c8c8c8; white-space: nowrap; }
    .win { width: 1920px; height: 1041px; display: flex; flex-direction: column; background: #191919; }
    .edge { width: 4px; display: flex; flex-direction: column; justify-content: space-between; }
    .edge .top { height: 36px; background: #f0f0f0; }
    .edge .end { height: 31px; background: #0c0c0c; }
    .title { height: 23px; background: #fff; color: #000; padding: 0 20px 0 3px; gap: 6px; font-family: "Open Sans", sans-serif; letter-spacing: -0.3px; }
    .logo { width: 14px; height: 14px; background: #1a1a1a; color: #ddd; display: flex; align-items: center; justify-content: center; }
    .menu { height: 20px; background: #fff; color: #000; padding: 0 0 0 7px; gap: 14px; font-family: "Open Sans", sans-serif; letter-spacing: -0.27px; border-bottom: 2px solid #f2f2f2; }
    .tools { height: 30px; padding: 0 9px; }
    .btn { height: 20px; background: #383838; justify-content: center; margin-right: 1px; color: #c4c4c4; }
    .btn:first-child { border-radius: 3px 0 0 3px; }
    .btn.off { background: #262626; color: #777; }
    .dd { height: 20px; background: #383838; border-radius: 3px; padding: 0 2px 0 5px; }
    .work { display: grid; grid-template-columns: 1465px 453px; column-gap: 2px; height: 945px; }
    .left { display: grid; grid-template-rows: 674px 269px; row-gap: 2px; }
    .up { display: grid; grid-template-columns: 362px 1101px; column-gap: 2px; }
    .status { height: 23px; border-bottom: 1px solid #0a0a0a; color: #d6a800; padding: 0 1px 0 3px; gap: 3px; letter-spacing: -0.075px; }
    .status .s { width: 26px; height: 21px; border-left: 1px solid #2a2a2a; color: #c8c8c8; justify-content: center; }
    .note { position: absolute; background: #fff; }
    .note text { font-family: Lato, "Open Sans", sans-serif; font-size: 39.500px; fill: #ed1c24; }
    .ink { position: absolute; left: 0; top: 0; pointer-events: none; }
  `];
  render() {
    return html`
      <div class="win">
        <div class="row title"><span class="logo">${ic("unity", 9)}</span><span class="grow">Town - SampleScene - PC, Mac &amp; Linux Standalone - Unity 2020.3.22f1 Personal* &lt;DX11&gt;</span>
          <svg class="ic" width="102" height="14" viewBox="0 0 102 14" fill="none" stroke="#000"><path d="M1 6.500h10M46.500 3.500h7v7h-7zM48.500 3.500v-2h7v7h-2M92 1l10 10M102 1L92 11"/></svg></div>
        <div class="row menu">${["File", "Edit", "Assets", "GameObject", "Component", "Mobile Input", "Window", "Help"].map((m) => html`<span>${m}</span>`)}</div>
        <div class="row tools">
          ${["hand", "move", "rotate", "scale", "rect", "transform", "tools"].map((n) => html`<div class="row btn" style="width:31px">${ic(n, 16)}</div>`)}
          <div class="row btn" style="width:62px;margin-left:8px;font-size:12.400px;border-radius:3px 0 0 3px">${ic("pivot", 15)}<span>Pivot</span></div>
          <div class="row btn" style="width:63px;font-size:12.400px;gap:1px">${ic("global", 15)}<span>Global</span></div>
          <div class="row btn off" style="width:31px;margin-left:8px">${ic("snap", 15)}</div>
          <div class="row" style="margin-left:483px"><div class="row btn" style="width:30px">${ic("play", 16)}</div><div class="row btn" style="width:30px">${ic("pause", 15)}</div><div class="row btn off" style="width:31px">${ic("step", 15)}</div></div>
          <div class="grow"></div>
          <div class="row" style="gap:10px">
            <div class="row dd" style="width:30px;padding:0 8px">${ic("plastic", 14)}</div><div class="row dd" style="width:30px;padding:0 7px">${ic("cloud", 16)}</div>
            ${([["Account", 78], ["Layers", 78], ["Layout", 108]] as [string, number][]).map(([n, w]) => html`<div class="row dd" style="width:${w}px"><span class="grow">${n}</span>${ic("down", 13)}</div>`)}
          </div>
        </div>
        <div class="work">
          <div class="left"><div class="up"><hierarchy-panel></hierarchy-panel><scene-panel></scene-panel></div><project-panel></project-panel></div>
          <inspector-panel></inspector-panel>
        </div>
        <div class="row status">${ic("warning", 14)}<span class="grow">Visual Studio Editor Package version 2.0.17 is available, we strongly encourage you to update from the Unity Package Manager for a better Visual Studio integration</span>
          <div class="row">${["bug", "layers", "refreshOff", "ok"].map((n) => html`<div class="row s">${ic(n, 15)}</div>`)}</div></div>
      </div>
      <div class="edge"><div class="top"></div><div class="end"></div></div>
      ${NOTES.map((n) => html`<svg class="note" style="left:${n.x}px;top:${n.y}px" width=${n.w} height=${n.h}>
        ${n.lines.map(([t, x, y, w]) => svg`<text x=${x} y=${y} textLength=${w} lengthAdjust="spacingAndGlyphs">${t}</text>`)}</svg>`)}
      <svg class="ink" width="1924" height="1041" fill="none" stroke="#ed1c24" stroke-width="5" stroke-linecap="round">
        <path stroke-linecap="butt" d="M122 167.500h21M143 168.500h42M185 169.500h42M227 170.500h42M269 171.500h41M310 172.500h42M352 173.500h42M394 174.500h23"/><path d="M122 167.500h1"/>
        <path d="M1470 366L1248 511M1674 293L1779 505M1902 309L1812 511M1041.500 443h1.500"/>
      </svg>`;
  }
}
